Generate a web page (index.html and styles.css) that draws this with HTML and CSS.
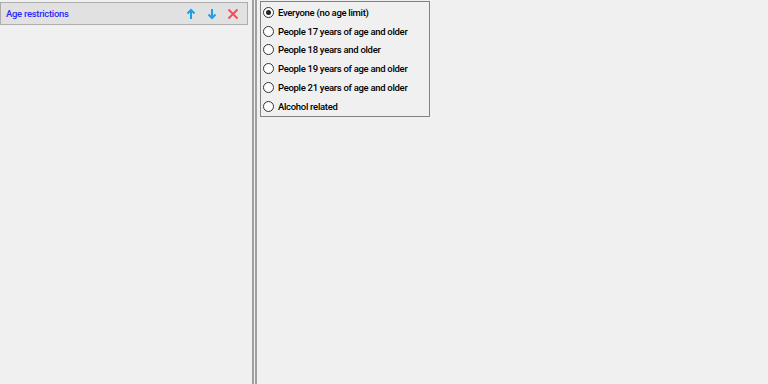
FILE: index.html
```html
<!DOCTYPE html>
<html>
<head>
<meta charset="utf-8">
<link rel="stylesheet" href="styles.css">
</head>
<body>
<div class="app">
  <div class="left">
    <div class="header">
      <span class="title">Age restrictions</span>
      <span class="icons">
        <svg class="ic" width="12" height="12" viewBox="0 0 12 12"><path d="M6 11V2M2.5 5.5L6 2l3.5 3.5" stroke="#1aa0e6" stroke-width="2" fill="none"/></svg>
        <svg class="ic" width="12" height="12" viewBox="0 0 12 12"><path d="M6 1v9M2.5 6.5L6 10l3.5-3.5" stroke="#1aa0e6" stroke-width="2" fill="none"/></svg>
        <svg class="ic" width="12" height="12" viewBox="0 0 12 12"><path d="M1.5 1.5l9 9M10.5 1.5l-9 9" stroke="#f0505a" stroke-width="2" fill="none"/></svg>
      </span>
    </div>
  </div>
  <div class="splitter"></div>
  <div class="right">
    <div class="group">
      <label class="opt"><span class="radio checked"></span>Everyone (no age limit)</label>
      <label class="opt"><span class="radio"></span>People 17 years of age and older</label>
      <label class="opt"><span class="radio"></span>People 18 years and older</label>
      <label class="opt"><span class="radio"></span>People 19 years of age and older</label>
      <label class="opt"><span class="radio"></span>People 21 years of age and older</label>
      <label class="opt"><span class="radio"></span>Alcohol related</label>
    </div>
  </div>
</div>
</body>
</html>
```
FILE: styles.css
```css
html, body {
  margin: 0;
  padding: 0;
  background: #f0f0f0;
  width: 768px;
  height: 384px;
  overflow: hidden;
  font-family: Roboto, "Noto Sans", sans-serif;
  font-size: 9.5px;
  font-weight: 500;
  letter-spacing: -0.3px;
  color: #000;
}
.app {
  display: flex;
  height: 384px;
}
.left {
  width: 252px;
  padding-top: 2px;
  box-sizing: border-box;
}
.header {
  width: 248px;
  height: 23px;
  box-sizing: border-box;
  border: 1px solid #adadad;
  background: #e1e1e1;
  display: flex;
  align-items: center;
  justify-content: space-between;
  padding: 0 8px 0 5px;
}
.title {
  color: #2b2bff;
}
.icons {
  display: flex;
  gap: 9px;
  align-items: center;
  padding-top: 1px;
}
.ic { display: block; }
.splitter {
  width: 5px;
  height: 384px;
  box-sizing: border-box;
  border-left: 2px solid #a0a0a0;
  border-right: 2px solid #a0a0a0;
  background: #f0f0f0;
}
.right {
  padding: 1px 0 0 3px;
}
.group {
  width: 170px;
  height: 116px;
  box-sizing: border-box;
  border: 1px solid #828282;
  padding: 1px 0 0 2px;
  display: flex;
  flex-direction: column;
}
.opt {
  display: flex;
  align-items: center;
  height: 18.8px;
  gap: 4px;
  white-space: nowrap;
}
.radio {
  width: 11px;
  height: 11px;
  box-sizing: border-box;
  border: 1px solid #333;
  border-radius: 50%;
  background: #fff;
  position: relative;
  flex: none;
}
.radio.checked::after {
  content: "";
  position: absolute;
  left: 2px;
  top: 2px;
  width: 5px;
  height: 5px;
  border-radius: 50%;
  background: #222;
}
```
